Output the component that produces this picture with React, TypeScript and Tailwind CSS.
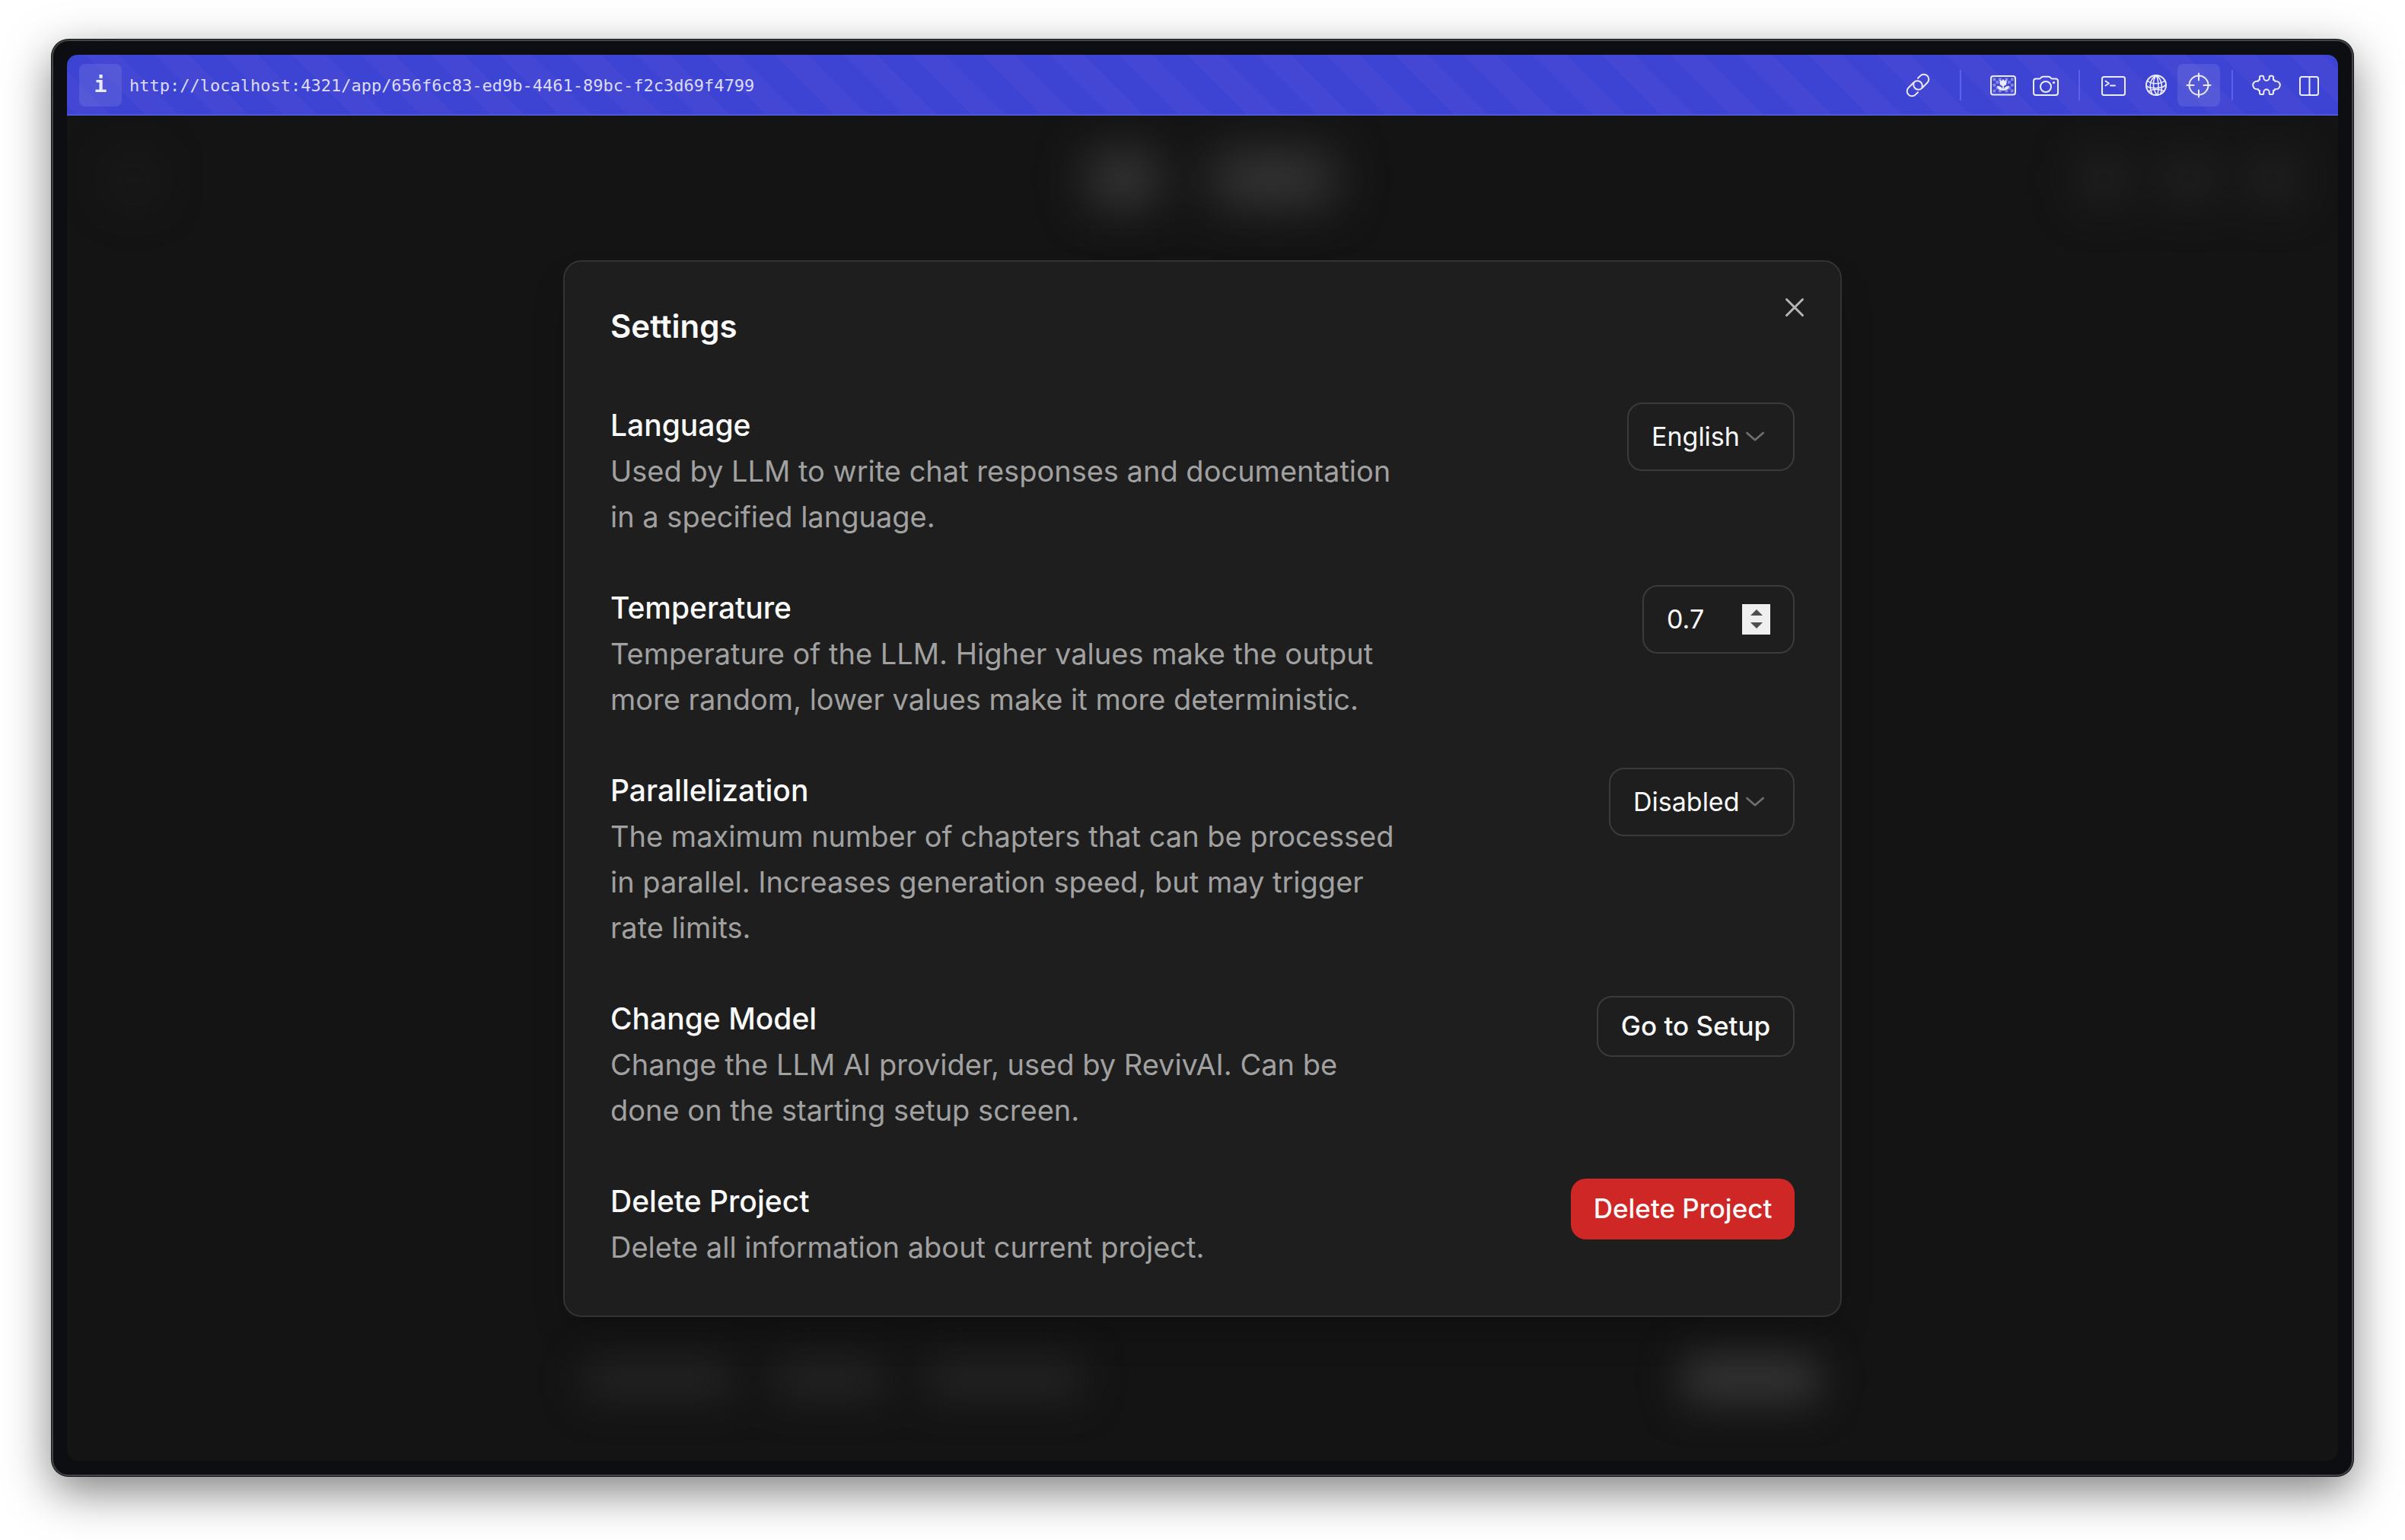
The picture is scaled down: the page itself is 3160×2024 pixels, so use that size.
import { useState } from "react";
import type { ReactNode } from "react";

function IconButton({ label, active, children }: { label: string; active?: boolean; children: ReactNode }) {
  return (
    <button
      type="button"
      aria-label={label}
      className={
        active
          ? "flex size-14 items-center justify-center rounded-lg bg-white/10"
          : "flex size-14 items-center justify-center rounded-lg"
      }
    >
      {children}
    </button>
  );
}

function Icon({ children }: { children: ReactNode }) {
  return (
    <svg
      viewBox="0 0 40 40"
      className="size-10"
      fill="none"
      stroke="currentColor"
      strokeWidth="2"
      strokeLinecap="round"
      strokeLinejoin="round"
      aria-hidden="true"
    >
      {children}
    </svg>
  );
}

function LinkIcon() {
  return (
    <Icon>
      <g transform="rotate(-45 20 20)">
        <path d="M13.500 26.500H9a6.500 6.500 0 0 1 0-13h10a6.500 6.500 0 0 1 6.400 7.800 6.500 6.500 0 0 1-3.600 4.600" />
        <path d="M26.500 13.500H31a6.500 6.500 0 0 1 0 13H21a6.500 6.500 0 0 1-6.400-7.800 6.500 6.500 0 0 1 3.600-4.600" />
      </g>
    </Icon>
  );
}

function PictureIcon() {
  const squares = [
    [6.5, 10.5], [14, 10.5], [22.5, 10.5], [30, 10.5],
    [10.5, 14.2], [26, 14.2], [6.5, 18], [30, 18],
    [10.5, 21.8], [26, 21.8], [6.5, 25.6], [14, 25.6], [22.5, 25.6], [30, 25.6],
  ];
  return (
    <Icon>
      <g fill="currentColor" stroke="none" opacity="0.4">
        {squares.map(([x, y]) => (
          <rect key={`${x}-${y}`} x={x} y={y} width="3.7" height="3.7" />
        ))}
      </g>
      <rect x="4" y="8" width="32" height="24.5" rx="3" />
      <path
        d="M15.500 12.500l2.400 2 2.100-2.400 2.100 2.400 2.400-2v4.200c0 2.400-1.600 4-3.600 4.200v4c1-2.400 3-3.900 7-4.100-.3 4-3 6.200-7.900 6.200s-7.600-2.200-7.900-6.200c4 .2 6 1.700 7 4.100v-4c-2-.2-3.600-1.800-3.600-4.200z"
        fill="currentColor"
        stroke="none"
      />
    </Icon>
  );
}

function CameraIcon() {
  return (
    <Icon>
      <path d="M4 14.500a3 3 0 0 1 3-3h4.200c1 0 1.700-.5 2.300-1.200l.6-.6a3.500 3.500 0 0 1 2.400-1h7a3.500 3.500 0 0 1 2.400 1l.6.6c.6.700 1.300 1.200 2.300 1.200H33a3 3 0 0 1 3 3V30a3 3 0 0 1-3 3H7a3 3 0 0 1-3-3z" />
      <circle cx="20" cy="22" r="7" />
      <circle cx="30.500" cy="16.500" r="1.600" fill="currentColor" stroke="none" />
    </Icon>
  );
}

function TerminalIcon() {
  return (
    <Icon>
      <rect x="5" y="9" width="30" height="24" rx="2.500" />
      <path d="M9.500 14.500l4.500 3-4.500 3M16 20.500h6" />
    </Icon>
  );
}

function GlobeIcon() {
  return (
    <Icon>
      <circle cx="20" cy="20" r="13" />
      <g strokeWidth="1.600">
        <path d="M20 7c-8 5-10 15-5 25M20 7c-5 7-5 17 1 26M20 7c3 5 4 16 2 26M20 7c7 4 9 14 6 24" />
        <path d="M8.500 14c6 5 17 5 23 0M7 20.500c3 4 22 5 26-1.500M10 28.500c4-4 15-4 20.500-.5" />
      </g>
    </Icon>
  );
}

function TargetIcon() {
  return (
    <Icon>
      <circle cx="20" cy="20" r="12.500" />
      <path d="M20 4.500v9M20 26.500v9M4.500 20h9M26.500 20h9" />
    </Icon>
  );
}

function PuzzleIcon() {
  return (
    <Icon>
      <path d="M9 14.800c0-1.300.9-1.800 2-1.800V9.500a1.700 1.700 0 0 1 1.700-1.700h2.100c1 0 1.500.7 1.500 1.600v.9a3.700 3.700 0 0 0 7.400 0v-.9c0-.9.500-1.600 1.500-1.600h2.100A1.700 1.700 0 0 1 29 9.500V13c1.100 0 2 .5 2 1.800h1.600a5 5 0 0 1 0 10.400H31c0 1.300-.9 1.800-2 1.800v3.300a1.700 1.700 0 0 1-1.700 1.700h-2.100c-1 0-1.500-.7-1.500-1.600v-1.100a3.700 3.700 0 0 0-7.400 0v1.100c0 .9-.5 1.600-1.500 1.600h-2.100a1.700 1.700 0 0 1-1.700-1.700V27c-1.100 0-2-.5-2-1.800H7.400a5 5 0 0 1 0-10.400z" />
    </Icon>
  );
}

function ColumnsIcon() {
  return (
    <Icon>
      <rect x="8" y="9" width="24" height="24" rx="2.500" />
      <path d="M20.500 9v24" />
    </Icon>
  );
}

function Separator({ wide }: { wide?: boolean }) {
  return <span className={wide ? "mx-[27px] h-10 w-0.5 bg-[#5b61ee]" : "mr-4 ml-[15px] h-10 w-0.5 bg-[#5b61ee]"} />;
}

function AddressBar() {
  return (
    <div className="flex h-20 shrink-0 items-center bg-[#3d43d3] bg-[repeating-linear-gradient(45deg,transparent_0px,transparent_10px,#4347d3_10px,#4347d3_41px,transparent_41px,transparent_64px)] pr-[10px] pl-4 text-[#ecebfc] shadow-[inset_0_-2px_0_#5257d8]">
      <button
        type="button"
        aria-label="Site information"
        className="flex size-14 items-center justify-center rounded-lg bg-white/10 font-['DejaVu_Sans_Mono',monospace] text-[28px] font-bold"
      >
        i
      </button>
      <a href="#project" className="ml-[10px] font-['DejaVu_Sans_Mono',monospace] text-[22px] text-[#dcdcf8]">
        http://localhost:4321/app/656f6c83-ed9b-4461-89bc-f2c3d69f4799
      </a>
      <div className="ml-auto flex items-center">
        <IconButton label="Copy link"><LinkIcon /></IconButton>
        <Separator wide />
        <IconButton label="Capture picture"><PictureIcon /></IconButton>
        <IconButton label="Take screenshot"><CameraIcon /></IconButton>
        <Separator />
        <IconButton label="Console"><TerminalIcon /></IconButton>
        <IconButton label="Network"><GlobeIcon /></IconButton>
        <IconButton label="Inspect element" active><TargetIcon /></IconButton>
        <Separator />
        <IconButton label="Extensions"><PuzzleIcon /></IconButton>
        <IconButton label="Split view"><ColumnsIcon /></IconButton>
      </div>
    </div>
  );
}

function Backdrop() {
  return (
    <div aria-hidden="true" className="flex flex-1 flex-col justify-between px-[60px] pt-[50px] pb-[76px]">
      <div className="grid grid-cols-3 items-center blur-[32px]">
        <div className="ml-2 size-10 bg-[#222]" />
        <div className="flex items-center justify-center gap-[72px] pl-6">
          <div className="h-[66px] w-[90px] rounded-2xl bg-[#3c3c3c]" />
          <div className="h-[66px] w-[160px] rounded-2xl bg-[#383838]" />
        </div>
        <div className="flex items-center justify-end gap-16">
          <div className="size-12 bg-[#2c2c2c]" />
          <div className="size-12 bg-[#2c2c2c]" />
          <div className="size-12 bg-[#2c2c2c]" />
        </div>
      </div>
      <div className="mx-auto flex w-full max-w-[1620px] items-center gap-[60px] blur-[26px]">
        <div className="h-[50px] w-[190px] bg-[#242424]" />
        <div className="h-[50px] w-[140px] bg-[#242424]" />
        <div className="h-[50px] w-[200px] bg-[#242424]" />
        <div className="ml-auto h-[64px] w-[180px] rounded-2xl bg-[#333]" />
      </div>
    </div>
  );
}

function Setting({ id, title, text, children }: { id: string; title: string; text: string; children: ReactNode }) {
  return (
    <div className="flex items-start justify-between">
      <div className="w-2/3 leading-[60px]">
        <label htmlFor={id} className="block text-[39px] font-medium text-[#fafafa]">{title}</label>
        <p className="text-[38px] text-[#a1a1a1]">{text}</p>
      </div>
      {children}
    </div>
  );
}

function SelectBox({ id, value, className }: { id: string; value: string; className: string }) {
  return (
    <div className={`relative ${className}`}>
      <select
        id={id}
        defaultValue={value}
        className="h-[90px] w-full appearance-none rounded-[20px] border-2 border-[#3b3b3b] bg-transparent pl-[30px] text-[34px] text-[#fafafa]"
      >
        <option>{value}</option>
      </select>
      <svg
        viewBox="0 0 15 15"
        className="pointer-events-none absolute top-6 right-8 size-10 text-[#6f6f6f]"
        fill="none"
        stroke="currentColor"
        strokeLinecap="round"
        strokeLinejoin="round"
        aria-hidden="true"
      >
        <path d="M3.500 6L7.500 9.500L11.500 6" />
      </svg>
    </div>
  );
}

function NumberBox({ id }: { id: string }) {
  const [value, setValue] = useState(0.7);
  const step = (d: number) => setValue((v) => Math.round((v + d) * 10) / 10);
  return (
    <div className="flex h-[90px] w-[200px] items-center justify-between rounded-[20px] border-2 border-[#3b3b3b] px-[30px]">
      <input
        id={id}
        type="number"
        step="0.1"
        value={value}
        onChange={(e) => setValue(Number(e.target.value))}
        className="w-20 appearance-none bg-transparent text-[34px] text-[#fafafa] outline-none [appearance:textfield] [&::-webkit-inner-spin-button]:appearance-none"
      />
      <div className="flex h-10 w-[37px] shrink-0 flex-col bg-[#efefef] text-[#4d4d4d]">
        <button type="button" aria-label="Increase" onClick={() => step(0.1)} className="flex flex-1 items-end justify-center pb-1">
          <svg viewBox="0 0 16 8" className="h-2 w-4" fill="currentColor" aria-hidden="true"><path d="M0 8L8 0L16 8z" /></svg>
        </button>
        <button type="button" aria-label="Decrease" onClick={() => step(-0.1)} className="flex flex-1 items-start justify-center pt-[5px]">
          <svg viewBox="0 0 16 8" className="h-2 w-4" fill="currentColor" aria-hidden="true"><path d="M0 0L8 8L16 0z" /></svg>
        </button>
      </div>
    </div>
  );
}

function SettingsDialog() {
  return (
    <div
      role="dialog"
      aria-labelledby="settings-title"
      className="relative flex w-full max-w-[1680px] flex-col rounded-3xl border-2 border-[#333] bg-[#1e1e1e] p-[60px] shadow-2xl"
    >
      <h2 id="settings-title" className="mb-[75px] text-[42px] leading-[50px] font-semibold text-[#fafafa]">Settings</h2>
      <button type="button" aria-label="Close" className="absolute top-10 right-10 flex size-10 items-center justify-center text-[#b6b6b6]">
        <svg viewBox="0 0 40 40" className="size-10" fill="none" stroke="currentColor" strokeWidth="3" strokeLinecap="round" aria-hidden="true">
          <path d="M9.500 9.500l21 21M30.500 9.500l-21 21" />
        </svg>
      </button>
      <div className="flex flex-col gap-[60px]">
        <Setting id="language" title="Language" text="Used by LLM to write chat responses and documentation in a specified language.">
          <SelectBox id="language" value="English" className="w-[220px]" />
        </Setting>
        <Setting id="temperature" title="Temperature" text="Temperature of the LLM. Higher values make the output more random, lower values make it more deterministic.">
          <NumberBox id="temperature" />
        </Setting>
        <Setting id="parallelization" title="Parallelization" text="The maximum number of chapters that can be processed in parallel. Increases generation speed, but may trigger rate limits.">
          <SelectBox id="parallelization" value="Disabled" className="w-[244px]" />
        </Setting>
        <Setting id="setup" title="Change Model" text="Change the LLM AI provider, used by RevivAI. Can be done on the starting setup screen.">
          <button id="setup" type="button" className="flex h-20 w-[260px] items-center justify-center rounded-[20px] border-2 border-[#3b3b3b] text-[35px] font-medium whitespace-nowrap text-[#fafafa]">
            Go to Setup
          </button>
        </Setting>
        <Setting id="delete" title="Delete Project" text="Delete all information about current project.">
          <button id="delete" type="button" className="flex h-20 w-[294px] items-center justify-center rounded-[20px] bg-[#cf2626] text-[35px] font-medium whitespace-nowrap text-[#fafafa]">
            Delete Project
          </button>
        </Setting>
      </div>
    </div>
  );
}

export default function App() {
  return (
    <main className="flex min-h-screen flex-col bg-white px-[68px] pt-[52px] pb-[84px] font-[Inter,sans-serif]">
      <div className="flex flex-1 flex-col rounded-[22px] border-2 border-[#424447] bg-[#0c0e12] p-[18px] shadow-[0_0_0_1px_#151515,0_20px_60px_rgba(0,0,0,0.5)]">
        <div className="flex flex-1 flex-col overflow-hidden rounded-[14px] bg-[#141414]">
          <AddressBar />
          <div className="relative flex flex-1 flex-col overflow-hidden">
            <Backdrop />
            <div className="absolute inset-0 flex items-center justify-center">
              <SettingsDialog />
            </div>
          </div>
        </div>
      </div>
    </main>
  );
}
